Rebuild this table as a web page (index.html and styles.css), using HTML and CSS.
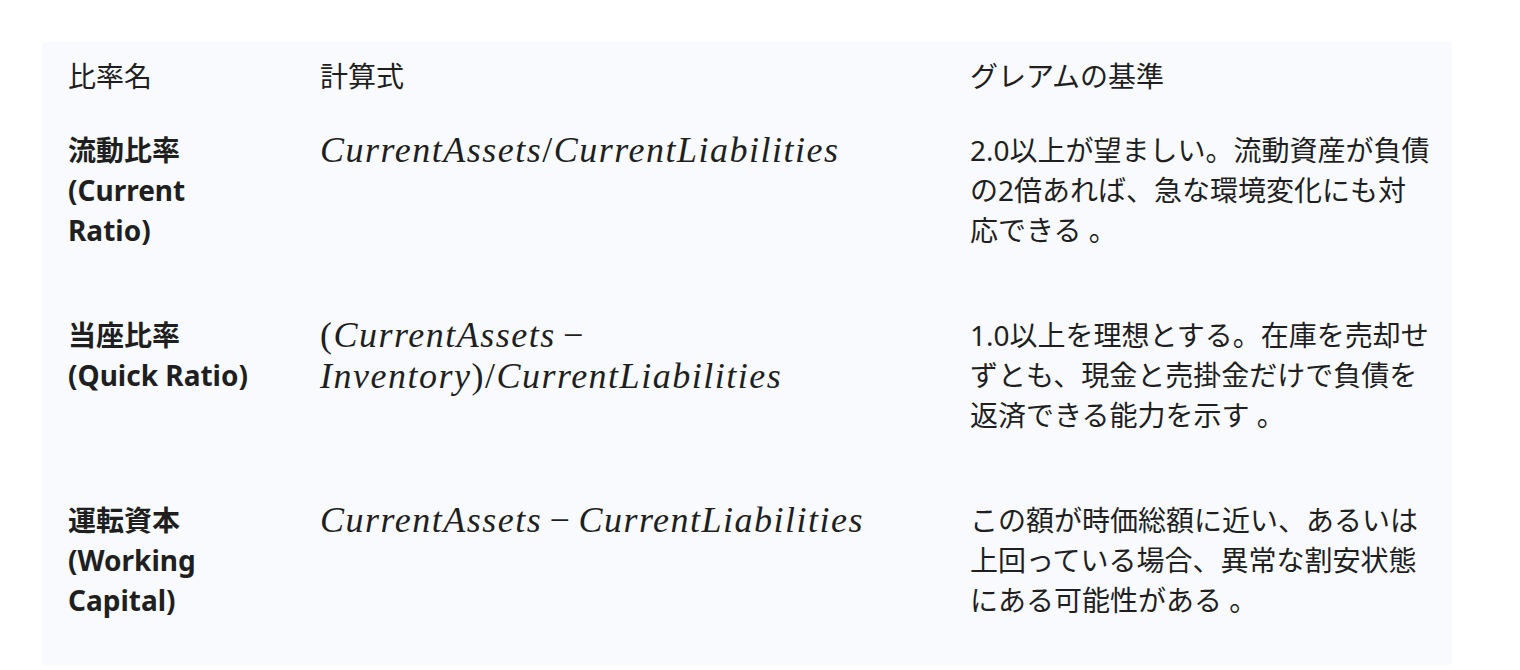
FILE: index.html
```html
<!DOCTYPE html>
<html lang="ja">
<head>
<meta charset="utf-8">
<title>グレアムの基準</title>
<link rel="stylesheet" href="styles.css">
</head>
<body>
<div class="page">
  <div class="table">
    <div class="cell head">比率名</div>
    <div class="cell head">計算式</div>
    <div class="cell head">グレアムの基準</div>

    <div class="cell name">流動比率<br>(Current<br>Ratio)</div>
    <div class="cell formula"><span class="math"><span class="chunk">CurrentAssets<span class="up">/</span>CurrentLiabilities</span></span></div>
    <div class="cell text">2.0以上が望ましい。流動資産が負債の2倍あれば、急な環境変化にも対応できる 。</div>

    <div class="cell name">当座比率<br>(Quick Ratio)</div>
    <div class="cell formula"><span class="math"><span class="chunk"><span class="up">(</span>CurrentAssets<span class="bin">−</span></span><span class="chunk">Inventory<span class="up">)/</span>CurrentLiabilities</span></span></div>
    <div class="cell text">1.0以上を理想とする。在庫を売却せずとも、現金と売掛金だけで負債を返済できる能力を示す 。</div>

    <div class="cell name">運転資本<br>(Working<br>Capital)</div>
    <div class="cell formula"><span class="math"><span class="chunk">CurrentAssets<span class="bin">−</span></span><span class="chunk">CurrentLiabilities</span></span></div>
    <div class="cell text">この額が時価総額に近い、あるいは上回っている場合、異常な割安状態にある可能性がある 。</div>
  </div>
</div>
</body>
</html>
```

FILE: styles.css
```css
html, body {
  margin: 0;
  padding: 0;
  background: #ffffff;
}

.page {
  padding: 42px 0 0 42px;
}

.table {
  width: 1410px;
  display: grid;
  grid-template-columns: 252px 650px 508px;
  background: #f8fafd;
  border-radius: 2px;
  font-family: "Noto Sans", "Noto Sans CJK JP", sans-serif;
  font-size: 28px;
  line-height: 40px;
  color: #1f1f1f;
}

.cell {
  padding: 20px 14px 45px 26px;
}

.cell.text {
  padding-right: 21px;
}

.cell.head {
  padding-top: 14px;
  padding-bottom: 14px;
  font-weight: 400;
}

.cell.name {
  font-weight: 700;
}

.math {
  font-family: "Liberation Serif", "DejaVu Serif", serif;
  font-style: italic;
  font-size: 36px;
  line-height: 40px;
  letter-spacing: 1.5px;
}

.chunk {
  display: inline-block;
  white-space: nowrap;
}

.up {
  font-style: normal;
}

.bin {
  font-style: normal;
  margin: 0 0.2em;
}
```
